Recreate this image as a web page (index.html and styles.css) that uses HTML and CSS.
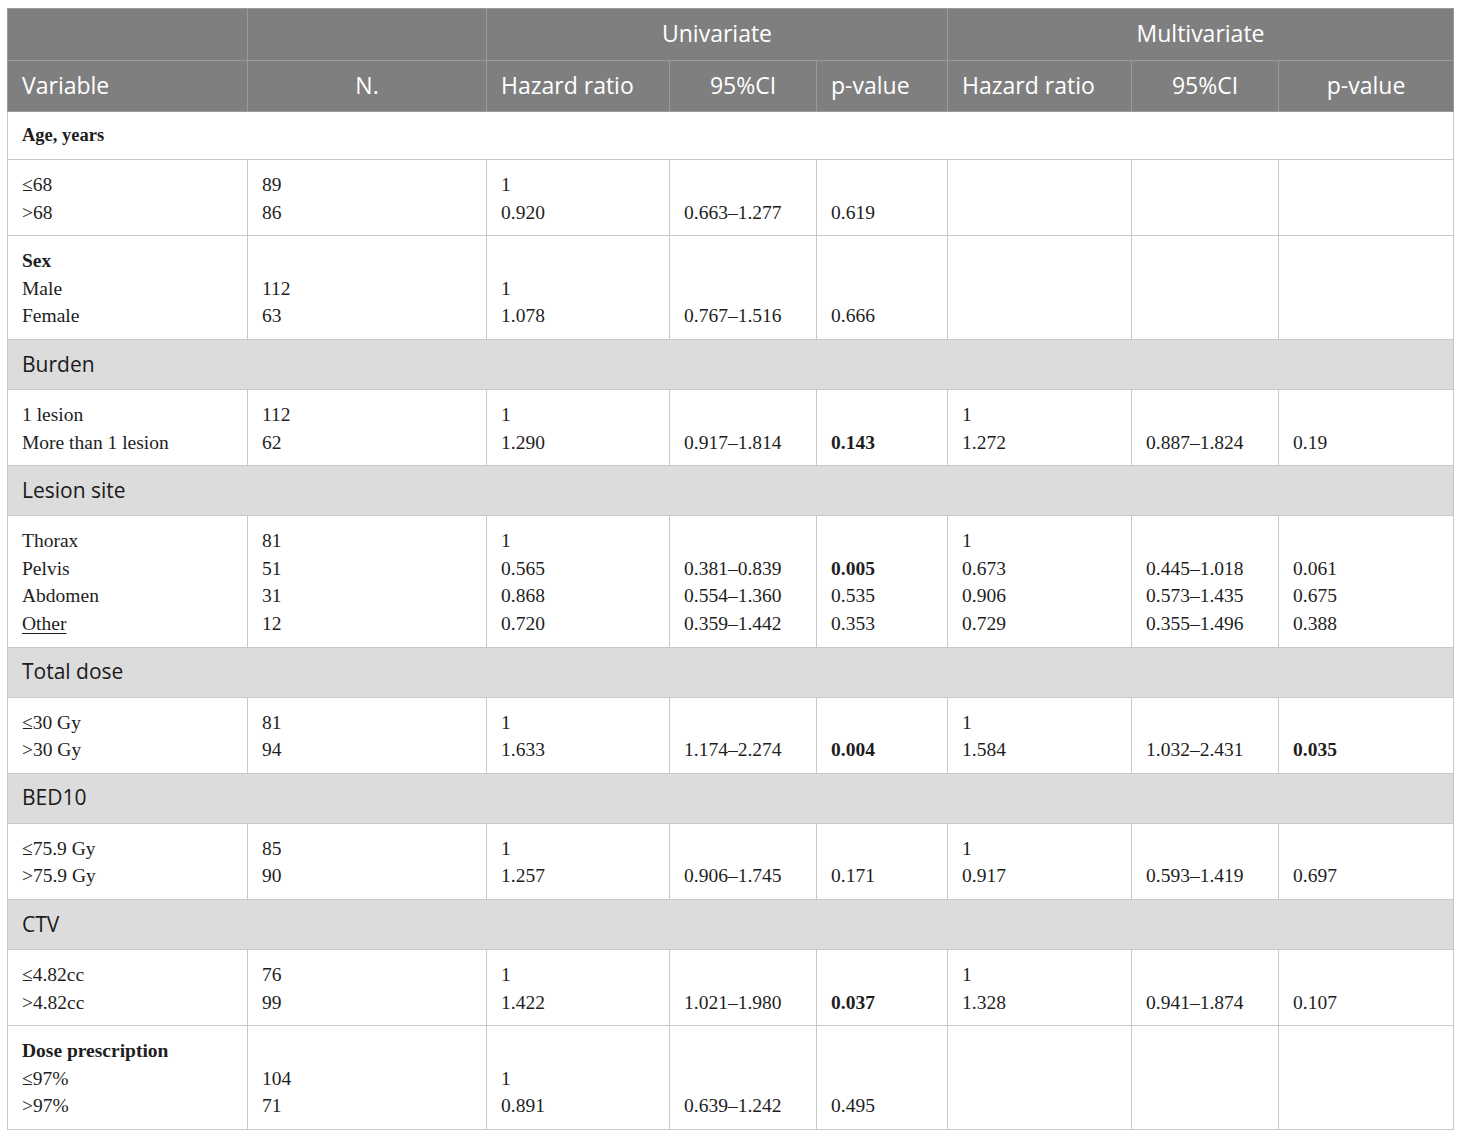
FILE: index.html
```html
<!DOCTYPE html>
<html>
<head>
<meta charset="utf-8">
<link rel="stylesheet" href="styles.css">
</head>
<body>
<table class="tbl">
  <colgroup>
    <col class="c1"><col class="c2"><col class="c3"><col class="c4"><col class="c5"><col class="c6"><col class="c7"><col class="c8">
  </colgroup>
  <thead>
    <tr class="h1">
      <th></th><th></th>
      <th colspan="3" class="center">Univariate</th>
      <th colspan="3" class="center">Multivariate</th>
    </tr>
    <tr class="h2">
      <th>Variable</th>
      <th class="center">N.</th>
      <th>Hazard ratio</th>
      <th class="center">95%CI</th>
      <th>p-value</th>
      <th>Hazard ratio</th>
      <th class="center">95%CI</th>
      <th class="center">p-value</th>
    </tr>
  </thead>
  <tbody>
    <tr class="title"><td colspan="8"><b>Age, years</b></td></tr>
    <tr class="data">
      <td>≤68<br>&gt;68</td><td>89<br>86</td><td>1<br>0.920</td><td><br>0.663–1.277</td><td><br>0.619</td><td></td><td></td><td></td>
    </tr>
    <tr class="data">
      <td><b>Sex</b><br>Male<br>Female</td><td><br>112<br>63</td><td><br>1<br>1.078</td><td><br><br>0.767–1.516</td><td><br><br>0.666</td><td></td><td></td><td></td>
    </tr>
    <tr class="section"><td colspan="8">Burden</td></tr>
    <tr class="data">
      <td>1 lesion<br>More than 1 lesion</td><td>112<br>62</td><td>1<br>1.290</td><td><br>0.917–1.814</td><td><br><b>0.143</b></td><td>1<br>1.272</td><td><br>0.887–1.824</td><td><br>0.19</td>
    </tr>
    <tr class="section"><td colspan="8">Lesion site</td></tr>
    <tr class="data">
      <td>Thorax<br>Pelvis<br>Abdomen<br><u>Other</u></td><td>81<br>51<br>31<br>12</td><td>1<br>0.565<br>0.868<br>0.720</td><td><br>0.381–0.839<br>0.554–1.360<br>0.359–1.442</td><td><br><b>0.005</b><br>0.535<br>0.353</td><td>1<br>0.673<br>0.906<br>0.729</td><td><br>0.445–1.018<br>0.573–1.435<br>0.355–1.496</td><td><br>0.061<br>0.675<br>0.388</td>
    </tr>
    <tr class="section"><td colspan="8">Total dose</td></tr>
    <tr class="data">
      <td>≤30 Gy<br>&gt;30 Gy</td><td>81<br>94</td><td>1<br>1.633</td><td><br>1.174–2.274</td><td><br><b>0.004</b></td><td>1<br>1.584</td><td><br>1.032–2.431</td><td><br><b>0.035</b></td>
    </tr>
    <tr class="section"><td colspan="8">BED10</td></tr>
    <tr class="data">
      <td>≤75.9 Gy<br>&gt;75.9 Gy</td><td>85<br>90</td><td>1<br>1.257</td><td><br>0.906–1.745</td><td><br>0.171</td><td>1<br>0.917</td><td><br>0.593–1.419</td><td><br>0.697</td>
    </tr>
    <tr class="section"><td colspan="8">CTV</td></tr>
    <tr class="data">
      <td>≤4.82cc<br>&gt;4.82cc</td><td>76<br>99</td><td>1<br>1.422</td><td><br>1.021–1.980</td><td><br><b>0.037</b></td><td>1<br>1.328</td><td><br>0.941–1.874</td><td><br>0.107</td>
    </tr>
    <tr class="data">
      <td><b>Dose prescription</b><br>≤97%<br>&gt;97%</td><td><br>104<br>71</td><td><br>1<br>0.891</td><td><br><br>0.639–1.242</td><td><br><br>0.495</td><td></td><td></td><td></td>
    </tr>
  </tbody>
</table>
</body>
</html>
```

FILE: styles.css
```css
html, body {
  margin: 0;
  padding: 0;
  background: #ffffff;
}

.tbl {
  margin: 8px 0 0 7px;
  border-collapse: collapse;
  table-layout: fixed;
  width: 1446px;
  font-family: "Liberation Serif", "Times New Roman", serif;
  font-size: 19.5px;
  color: #1e1e1e;
}

.c1 { width: 240px; }
.c2 { width: 239px; }
.c3 { width: 183px; }
.c4 { width: 147px; }
.c5 { width: 131px; }
.c6 { width: 184px; }
.c7 { width: 147px; }
.c8 { width: 175px; }

.tbl th {
  background: #7f7f7f;
  color: #ffffff;
  font-family: "Open Sans", "Noto Sans", sans-serif;
  font-weight: normal;
  font-size: 23px;
  text-align: left;
  padding: 0 14px 3px;
  border: 1px solid #9a9a9a;
}

.tbl th.center {
  text-align: center;
}

.h1 th { height: 52px; box-sizing: border-box; }
.h2 th { height: 51px; box-sizing: border-box; }

.tbl td {
  border: 1px solid #c8c8c8;
  padding: 11px 14px 9px;
  line-height: 27.6px;
  vertical-align: top;
  white-space: nowrap;
}

.title td {
  height: 48px;
  box-sizing: border-box;
  padding: 0 14px;
  vertical-align: middle;
  font-size: 18.5px;
}

.section td {
  height: 50px;
  box-sizing: border-box;
  padding: 0 14px;
  vertical-align: middle;
  background: #dcdcdc;
  font-family: "Open Sans", "Noto Sans", sans-serif;
  font-size: 21px;
  color: #1a1a1a;
}

.tbl u {
  text-decoration: underline;
  text-underline-offset: 3px;
}
```
